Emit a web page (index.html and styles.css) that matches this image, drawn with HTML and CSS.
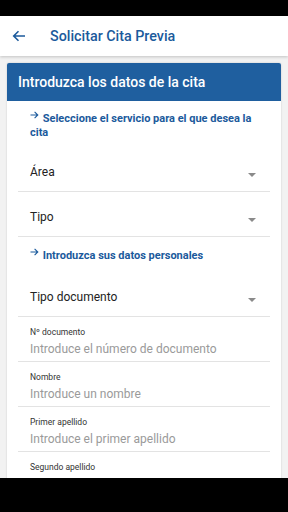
FILE: index.html
```html
<!DOCTYPE html>
<html lang="es">
<head>
    <meta charset="UTF-8">
    <meta name="viewport" content="width=device-width, initial-scale=1.0">
    <title>Solicitar Cita Previa</title>
    <link rel="stylesheet" href="styles.css">
</head>
<body>
    <div class="screen">
        <div class="status-bar"></div>

        <header class="app-bar">
            <svg class="back" width="14" height="12" viewBox="0 0 14 12">
                <path d="M13 6H2M6.5 1.2L1.7 6l4.8 4.8" fill="none" stroke="#1b5a9c" stroke-width="1.6"/>
            </svg>
            <h1>Solicitar Cita Previa</h1>
        </header>

        <main class="content">
            <div class="card">
                <div class="card-header">Introduzca los datos de la cita</div>
                <div class="card-body">
                    <h2 class="section-title">
                        <svg class="arrow" width="9" height="8" viewBox="0 0 9 8">
                            <path d="M0.5 4H7.8M4.6 0.9L7.8 4L4.6 7.1" fill="none" stroke="#1b5a9c" stroke-width="1.1"/>
                        </svg>
                        Seleccione el servicio para el que desea la cita
                    </h2>

                    <div class="field select">
                        <span class="value">Área</span>
                        <span class="caret"></span>
                    </div>
                    <div class="field select">
                        <span class="value">Tipo</span>
                        <span class="caret"></span>
                    </div>

                    <h2 class="section-title single">
                        <svg class="arrow" width="9" height="8" viewBox="0 0 9 8">
                            <path d="M0.5 4H7.8M4.6 0.9L7.8 4L4.6 7.1" fill="none" stroke="#1b5a9c" stroke-width="1.1"/>
                        </svg>
                        Introduzca sus datos personales
                    </h2>

                    <div class="field select">
                        <span class="value">Tipo documento</span>
                        <span class="caret"></span>
                    </div>
                    <div class="field input">
                        <label>Nº documento</label>
                        <span class="placeholder">Introduce el número de documento</span>
                    </div>
                    <div class="field input">
                        <label>Nombre</label>
                        <span class="placeholder">Introduce un nombre</span>
                    </div>
                    <div class="field input">
                        <label>Primer apellido</label>
                        <span class="placeholder">Introduce el primer apellido</span>
                    </div>
                    <div class="field input">
                        <label>Segundo apellido</label>
                    </div>
                </div>
            </div>
        </main>

        <div class="nav-bar"></div>
    </div>
</body>
</html>
```

FILE: styles.css
```css
body {
    margin: 0;
    font-family: Roboto, "Noto Sans", sans-serif;
    background: #000;
}
.screen {
    width: 288px;
    height: 512px;
    display: flex;
    flex-direction: column;
    overflow: hidden;
    background: #f2f2f2;
}
.status-bar {
    height: 16px;
    flex-shrink: 0;
    background: #000;
}
.nav-bar {
    height: 34px;
    flex-shrink: 0;
    background: #000;
}
.app-bar {
    height: 40px;
    flex-shrink: 0;
    display: flex;
    align-items: center;
    background: #fff;
    box-shadow: 0 1px 3px rgba(0,0,0,0.2);
    position: relative;
    z-index: 1;
}
.back {
    margin-left: 12px;
    margin-right: 24px;
}
.app-bar h1 {
    margin: 0;
    font-size: 14.3px;
    font-weight: 500;
    color: #1b5a9c;
}
.content {
    flex: 1;
    overflow: hidden;
    padding: 7px 7px 0;
}
.card {
    background: #fff;
    border-radius: 2px;
    box-shadow: 0 0 2px rgba(0,0,0,0.18);
}
.card-header {
    height: 38px;
    display: flex;
    align-items: center;
    padding-left: 11px;
    background: #1f5f9f;
    color: #fff;
    font-size: 14px;
    font-weight: 500;
    border-radius: 2px 2px 0 0;
}
.card-body {
    padding: 10px 11px 0;
}
.section-title {
    margin: 0 0 7px;
    padding-left: 12px;
    font-size: 11px;
    line-height: 14px;
    font-weight: 700;
    color: #1b5a9c;
}
.section-title.single {
    margin-top: 11px;
    margin-bottom: 9px;
}
.arrow {
    vertical-align: 3px;
    margin-right: 1px;
}
.field {
    height: 45px;
    box-sizing: border-box;
    border-bottom: 1px solid #e3e3e3;
    padding-left: 12px;
}
.select {
    display: flex;
    justify-content: space-between;
    padding-top: 18px;
    padding-right: 14px;
}
.select .value {
    font-size: 12px;
    line-height: 14px;
    color: #222;
}
.caret {
    width: 0;
    height: 0;
    margin-top: 8px;
    border-left: 4px solid transparent;
    border-right: 4px solid transparent;
    border-top: 4px solid #8a8a8a;
}
.input {
    display: flex;
    flex-direction: column;
    padding-top: 10px;
}
.input label {
    font-size: 8.5px;
    line-height: 11px;
    color: #333;
}
.input .placeholder {
    margin-top: 4px;
    font-size: 12px;
    line-height: 14px;
    color: #9a9a9a;
}
```
